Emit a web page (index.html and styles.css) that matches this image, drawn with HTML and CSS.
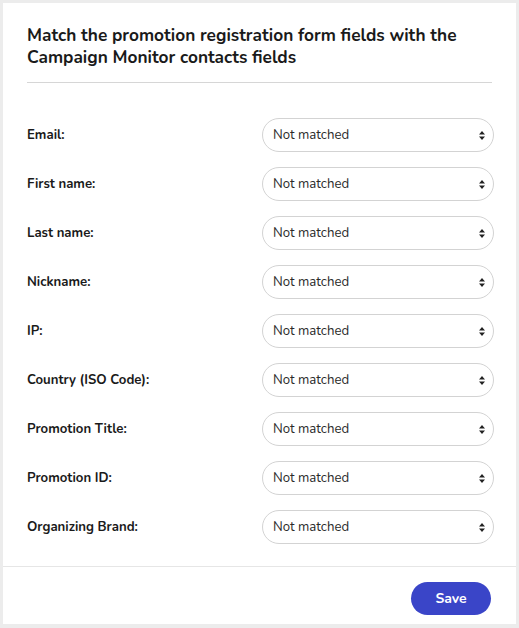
FILE: index.html
```html
<!DOCTYPE html>
<html>
<head>
<meta charset="utf-8">
<link rel="stylesheet" href="styles.css">
</head>
<body>
<div class="card">
  <div class="header">
    <h1 class="title">Match the promotion registration form fields with the Campaign Monitor contacts fields</h1>
  </div>
  <div class="rows">
    <div class="row"><span class="label">Email:</span><div class="select"><span>Not matched</span><svg class="arrows" width="6" height="9" viewBox="0 0 6 9"><path d="M0 3.5L3 0L6 3.5Z M0 5.5L3 9L6 5.5Z" fill="#222"/></svg></div></div>
    <div class="row"><span class="label">First name:</span><div class="select"><span>Not matched</span><svg class="arrows" width="6" height="9" viewBox="0 0 6 9"><path d="M0 3.5L3 0L6 3.5Z M0 5.5L3 9L6 5.5Z" fill="#222"/></svg></div></div>
    <div class="row"><span class="label">Last name:</span><div class="select"><span>Not matched</span><svg class="arrows" width="6" height="9" viewBox="0 0 6 9"><path d="M0 3.5L3 0L6 3.5Z M0 5.5L3 9L6 5.5Z" fill="#222"/></svg></div></div>
    <div class="row"><span class="label">Nickname:</span><div class="select"><span>Not matched</span><svg class="arrows" width="6" height="9" viewBox="0 0 6 9"><path d="M0 3.5L3 0L6 3.5Z M0 5.5L3 9L6 5.5Z" fill="#222"/></svg></div></div>
    <div class="row"><span class="label">IP:</span><div class="select"><span>Not matched</span><svg class="arrows" width="6" height="9" viewBox="0 0 6 9"><path d="M0 3.5L3 0L6 3.5Z M0 5.5L3 9L6 5.5Z" fill="#222"/></svg></div></div>
    <div class="row"><span class="label">Country (ISO Code):</span><div class="select"><span>Not matched</span><svg class="arrows" width="6" height="9" viewBox="0 0 6 9"><path d="M0 3.5L3 0L6 3.5Z M0 5.5L3 9L6 5.5Z" fill="#222"/></svg></div></div>
    <div class="row"><span class="label">Promotion Title:</span><div class="select"><span>Not matched</span><svg class="arrows" width="6" height="9" viewBox="0 0 6 9"><path d="M0 3.5L3 0L6 3.5Z M0 5.5L3 9L6 5.5Z" fill="#222"/></svg></div></div>
    <div class="row"><span class="label">Promotion ID:</span><div class="select"><span>Not matched</span><svg class="arrows" width="6" height="9" viewBox="0 0 6 9"><path d="M0 3.5L3 0L6 3.5Z M0 5.5L3 9L6 5.5Z" fill="#222"/></svg></div></div>
    <div class="row"><span class="label">Organizing Brand:</span><div class="select"><span>Not matched</span><svg class="arrows" width="6" height="9" viewBox="0 0 6 9"><path d="M0 3.5L3 0L6 3.5Z M0 5.5L3 9L6 5.5Z" fill="#222"/></svg></div></div>
  </div>
  <div class="footer">
    <button class="save">Save</button>
  </div>
</div>
</body>
</html>
```

FILE: styles.css
```css
html, body {
  margin: 0;
  padding: 0;
}
body {
  background: #ececec;
  font-family: "Nunito", "Lato", "Noto Sans", sans-serif;
  color: #1d1d1f;
  padding: 3px 3px 4px 3px;
  box-sizing: border-box;
  height: 628px;
}
.card {
  background: #fff;
  height: 621px;
  display: flex;
  flex-direction: column;
}
.header {
  margin: 0 24px;
  padding: 22px 0 13px 0;
  border-bottom: 1px solid #d6d6d6;
}
.title {
  margin: 0;
  font-size: 17.3px;
  font-weight: 700;
  line-height: 22px;
  color: #1a1a1a;
}
.rows {
  padding: 35px 22px 22px 24px;
  display: flex;
  flex-direction: column;
  gap: 15px;
}
.row {
  display: flex;
  align-items: center;
  justify-content: space-between;
  height: 34px;
}
.label {
  font-size: 13.2px;
  font-weight: 700;
  color: #1a1a1a;
}
.select {
  width: 232px;
  height: 34px;
  box-sizing: border-box;
  border: 1px solid #d3d3d3;
  border-radius: 17px;
  display: flex;
  align-items: center;
  justify-content: space-between;
  padding: 0 8px 0 10px;
  font-size: 13.2px;
  color: #2a2a2a;
}
.arrows {
  display: block;
}
.footer {
  margin-top: auto;
  border-top: 1px solid #e6e6e6;
  display: flex;
  justify-content: flex-end;
  padding: 15px 25px 9px 0;
}
.save {
  width: 80px;
  height: 33px;
  border: none;
  border-radius: 17px;
  background: #3a45c8;
  color: #fff;
  font-family: inherit;
  font-size: 14px;
  font-weight: 700;
}
```
